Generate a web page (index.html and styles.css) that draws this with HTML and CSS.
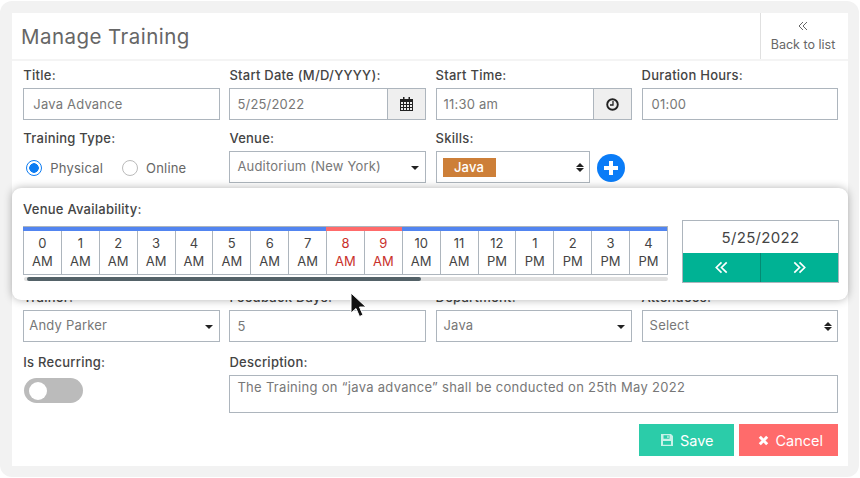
FILE: index.html
```html
<html>
<head>
<title>Manage Training</title>
<link rel="stylesheet" href="styles.css">
</head>
<body>
<div class="frame">
  <div class="card">
    <div class="head">
      <h1>Manage Training</h1>
      <div class="back">
        <svg class="back-icon" viewBox="0 0 10 10"><path d="M5 1 1 5l4 4M9 1 5 5l4 4"/></svg>
        <span>Back to list</span>
      </div>
    </div>
    <div class="form">
      <div class="row">
        <div class="cell"><label>Title:</label><div class="field">Java Advance</div></div>
        <div class="cell"><label>Start Date (M/D/YYYY):</label>
          <div class="field addon-field"><span class="val">5/25/2022</span>
            <span class="addon">
              <svg width="13" height="14" viewBox="0 0 13 14"><path class="ink" d="M3 0h1.500v2.500H3zM8.500 0H10v2.500H8.500z"/><path class="ink" fill-rule="evenodd" d="M0 2h13v12H0zM1 5v2h2V5zm3 0v2h2V5zm3 0v2h2V5zm3 0v2h2V5zM1 8v2h2V8zm3 0v2h2V8zm3 0v2h2V8zm3 0v2h2V8zM1 11v2h2v-2zm3 0v2h2v-2zm3 0v2h2v-2zm3 0v2h2v-2z"/></svg>
            </span>
          </div>
        </div>
        <div class="cell"><label>Start Time:</label>
          <div class="field addon-field"><span class="val">11:30 am</span>
            <span class="addon">
              <svg width="13" height="13" viewBox="0 0 13 13"><circle cx="6.500" cy="6.500" r="5.300" fill="none" stroke="#222" stroke-width="1.900"/><path d="M7 3v4H4" fill="none" stroke="#222" stroke-width="1.300"/></svg>
            </span>
          </div>
        </div>
        <div class="cell"><label>Duration Hours:</label><div class="field">01:00</div></div>
      </div>
      <div class="row">
        <div class="cell"><label>Training Type:</label>
          <div class="radios">
            <span class="radio on"></span><span class="radio-text">Physical</span>
            <span class="radio"></span><span class="radio-text">Online</span>
          </div>
        </div>
        <div class="cell"><label>Venue:</label><div class="field sel">Auditorium (New York)<span class="caret"></span></div></div>
        <div class="cell"><label>Skills:</label>
          <div class="skills">
            <div class="field sel skill-box"><span class="tag">Java</span><span class="updown"></span></div>
            <span class="plus"></span>
          </div>
        </div>
        <div class="cell"></div>
      </div>

      <div class="panel">
        <div class="panel-left">
          <label>Venue Availability:</label>
          <div class="hours">
            <div class="hour"><b>0</b><b>AM</b></div>
            <div class="hour"><b>1</b><b>AM</b></div>
            <div class="hour"><b>2</b><b>AM</b></div>
            <div class="hour"><b>3</b><b>AM</b></div>
            <div class="hour"><b>4</b><b>AM</b></div>
            <div class="hour"><b>5</b><b>AM</b></div>
            <div class="hour"><b>6</b><b>AM</b></div>
            <div class="hour"><b>7</b><b>AM</b></div>
            <div class="hour busy"><b>8</b><b>AM</b></div>
            <div class="hour busy"><b>9</b><b>AM</b></div>
            <div class="hour"><b>10</b><b>AM</b></div>
            <div class="hour"><b>11</b><b>AM</b></div>
            <div class="hour"><b>12</b><b>PM</b></div>
            <div class="hour"><b>1</b><b>PM</b></div>
            <div class="hour"><b>2</b><b>PM</b></div>
            <div class="hour"><b>3</b><b>PM</b></div>
            <div class="hour"><b>4</b><b>PM</b></div>
          </div>
          <div class="scroll"><div class="thumb"></div></div>
        </div>
        <div class="pager">
          <div class="pager-date">5/25/2022</div>
          <div class="pager-btns">
            <span><svg class="dbl" viewBox="0 0 10 10"><path d="M5 1 1 5l4 4M9 1 5 5l4 4"/></svg></span>
            <span><svg class="dbl" viewBox="0 0 10 10"><path d="M1 1l4 4-4 4M5 1l4 4-4 4"/></svg></span>
          </div>
        </div>
      </div>

      <div class="row under">
        <div class="cell"><label>Trainer:</label><div class="field sel tight">Andy Parker<span class="caret"></span></div></div>
        <div class="cell"><label>Feedback Days:</label><div class="field plain">5</div></div>
        <div class="cell"><label>Department:</label><div class="field sel">Java<span class="caret"></span></div></div>
        <div class="cell"><label>Attendees:</label><div class="field sel">Select<span class="updown"></span></div></div>
      </div>
      <div class="row last">
        <div class="cell"><label>Is Recurring:</label><div class="toggle"><span class="knob"></span></div></div>
        <div class="cell wide"><label>Description:</label>
          <div class="field area">The Training on “java advance” shall be conducted on 25th May 2022</div>
        </div>
      </div>
      <div class="actions">
        <div class="btn save">
          <svg width="14" height="14" viewBox="0 0 14 14"><path fill="#c8f2e8" fill-rule="evenodd" d="M1 1h10l2 2v10H1zM3.500 2.200v3.600h6V2.200zM7.300 2.800h1.300v2.300H7.300zM3 8v3.800h8V8z"/></svg>
          Save
        </div>
        <div class="btn cancel">
          <svg width="11" height="11" viewBox="0 0 11 11"><path d="M1.800 1.800l7.400 7.400M9.200 1.800l-7.400 7.400" stroke="#fff" stroke-width="3"/></svg>
          Cancel
        </div>
      </div>
    </div>
  </div>
  <svg class="pointer" width="18" height="27" viewBox="0 0 18 27"><path d="M1 1v20l5-4.500 3.500 8 3.500-1.500-3.500-8H16z" fill="#111" stroke="#fff" stroke-width="1"/></svg>
</div>
</body>
</html>
```

FILE: styles.css
```css
body {
  margin: 0;
  background: #fff;
  font-family: "Inter", "Open Sans", sans-serif;
  font-size: 13px;
  color: #444;
}
.frame {
  position: relative;
  box-sizing: border-box;
  width: 859px;
  height: 476px;
  margin-top: 1px;
  padding: 12px 11px 11px 12px;
  background: #f2f2f2;
  border-radius: 12px;
}
.card {
  height: 453px;
  background: #fff;
}
.head {
  display: flex;
  justify-content: space-between;
  height: 46px;
  border-bottom: 2px solid #f4f4f4;
}
h1 {
  margin: 0;
  padding: 11px 0 0 9px;
  font-size: 20.5px;
  font-weight: 400;
  letter-spacing: 0.45px;
  color: #666;
}
.back {
  display: flex;
  flex-direction: column;
  align-items: center;
  box-sizing: border-box;
  width: 88px;
  padding: 8px 3px 0 0;
  border-left: 1px solid #e0e0e0;
  font-size: 12.5px;
  color: #666;
}
.back-icon {
  width: 10px;
  height: 10px;
  margin-bottom: 6px;
  fill: none;
  stroke: #666;
  stroke-width: 1;
}
.form {
  padding: 4px 9.8px 0 11.3px;
}
.row {
  display: grid;
  grid-template-columns: repeat(4, 1fr);
  column-gap: 9.5px;
  margin-bottom: 8px;
}
.row.under {
  position: relative;
  margin-top: -13px;
  margin-bottom: 10px;
}
.row.last {
  margin-bottom: 11px;
}
.wide {
  grid-column: span 3;
}
label {
  display: block;
  height: 20px;
  margin-bottom: 3px;
  line-height: 20px;
  font-size: 13px;
  font-weight: 500;
  letter-spacing: 0.25px;
  color: #444;
}
.field {
  position: relative;
  display: flex;
  align-items: center;
  box-sizing: border-box;
  height: 32px;
  padding: 0 9px;
  border: 1px solid #adb5bd;
  background: #fff;
  font-size: 13px;
  letter-spacing: 0.2px;
  color: #777;
}
.sel {
  padding-left: 7px;
  padding-bottom: 2px;
}
.tight {
  padding-left: 5px;
}
.plain {
  padding-left: 7px;
}
.addon-field {
  padding: 0 0 0 7px;
}
.val {
  flex: 1;
}
.addon {
  display: flex;
  align-items: center;
  justify-content: center;
  width: 37px;
  height: 100%;
  border-left: 1px solid #adb5bd;
  background: #efefef;
}
.ink {
  fill: #222;
}
.caret {
  position: absolute;
  right: 6px;
  top: 14px;
  border-left: 4px solid transparent;
  border-right: 4px solid transparent;
  border-top: 4px solid #222;
}
.updown {
  position: absolute;
  right: 5px;
  top: 11px;
  width: 8px;
  height: 9px;
}
.updown::before,
.updown::after {
  content: "";
  position: absolute;
  left: 0;
  border-left: 4px solid transparent;
  border-right: 4px solid transparent;
}
.updown::before {
  top: 0;
  border-bottom: 4px solid #222;
}
.updown::after {
  bottom: 0;
  border-top: 4px solid #222;
}
.radios {
  display: flex;
  align-items: center;
  box-sizing: border-box;
  height: 32px;
  padding: 2px 0 0 3px;
}
.radio {
  box-sizing: border-box;
  width: 16px;
  height: 16px;
  border: 1.500px solid #bbb;
  border-radius: 50%;
}
.radio.on {
  border-color: #0d7cf2;
  background: radial-gradient(circle, #0d7cf2 0 4.500px, #fff 5px);
}
.radio-text {
  margin: 0 19px 0 8px;
  color: #666;
  letter-spacing: 0.2px;
}
.skills {
  display: flex;
  align-items: center;
  gap: 7px;
}
.skill-box {
  width: 154.5px;
  padding: 0 0 0 6px;
}
.tag {
  width: 53px;
  height: 19px;
  background: #cd7f38;
  color: #fff;
  font-weight: 500;
  line-height: 19px;
  text-align: center;
}
.plus {
  width: 28px;
  height: 28px;
  margin-top: 2px;
  border-radius: 50%;
  background:
    linear-gradient(#fff, #fff) center / 14px 4px no-repeat,
    linear-gradient(#fff, #fff) center / 4px 14px no-repeat,
    #0a7cf7;
}
.panel {
  position: relative;
  z-index: 1;
  display: flex;
  box-sizing: border-box;
  height: 112px;
  margin: -3px -9.8px 0 -11.3px;
  padding: 11px 9px 0 11px;
  background: #fff;
  border-radius: 9px;
  box-shadow: 0 0 8px rgba(0, 0, 0, 0.3);
}
.panel-left {
  flex: none;
  width: 645px;
}
.panel-left label {
  margin-bottom: 7px;
}
.hours {
  display: flex;
  border: 1px solid #adb5bd;
  border-left: 0;
  height: 47px;
}
.hour {
  position: relative;
  flex: 1;
  display: flex;
  flex-direction: column;
  align-items: center;
  border-left: 1px solid #adb5bd;
  padding-top: 7px;
  font-size: 13px;
  line-height: 18px;
  color: #444;
}
.hour::before {
  content: "";
  position: absolute;
  top: 0;
  left: -1px;
  right: 0;
  height: 4px;
  background: #5285f0;
}
.hour b {
  font-weight: 400;
}
.hour.busy {
  color: #c9302c;
}
.hour.busy::before {
  background: #ff6b6b;
}
.scroll {
  height: 4px;
  margin: 2px 0 0 1px;
  background: #e0e0e0;
  border-radius: 2px;
}
.thumb {
  width: 394px;
  height: 4px;
  margin-left: 3px;
  background: #546268;
  border-radius: 2px;
}
.pager {
  flex: none;
  box-sizing: border-box;
  width: 157px;
  height: 63px;
  margin: 21px 0 0 14px;
  border: 1px solid #adb5bd;
}
.pager-date {
  height: 32px;
  line-height: 33px;
  text-align: center;
  font-size: 15px;
  letter-spacing: 0.3px;
  color: #444;
}
.pager-btns {
  display: flex;
  height: 29px;
  background: #00b294;
}
.pager-btns span {
  flex: 1;
  display: flex;
  align-items: center;
  justify-content: center;
}
.pager-btns span + span {
  border-left: 1px solid #058a73;
}
.dbl {
  width: 13px;
  height: 13px;
  fill: none;
  stroke: #fff;
  stroke-width: 1.300;
}
.toggle {
  display: flex;
  align-items: center;
  width: 59px;
  height: 25px;
  margin: 6px 0 0 1px;
  background: #bbb;
  border-radius: 13px;
}
.knob {
  width: 18px;
  height: 18px;
  margin-left: 5px;
  background: #fff;
  border-radius: 50%;
}
.area {
  align-items: flex-start;
  height: 38px;
  padding: 3px 7px;
  letter-spacing: 0.3px;
}
.actions {
  display: flex;
  justify-content: flex-end;
  gap: 5px;
}
.btn {
  display: flex;
  align-items: center;
  justify-content: center;
  gap: 6px;
  height: 32px;
  font-size: 14.5px;
  color: #fff;
}
.save {
  width: 95px;
  background: #2bcca9;
}
.cancel {
  box-sizing: border-box;
  width: 99px;
  padding-left: 4px;
  background: #ff6b6b;
}
.pointer {
  position: absolute;
  left: 350px;
  top: 291px;
  z-index: 2;
}
```
